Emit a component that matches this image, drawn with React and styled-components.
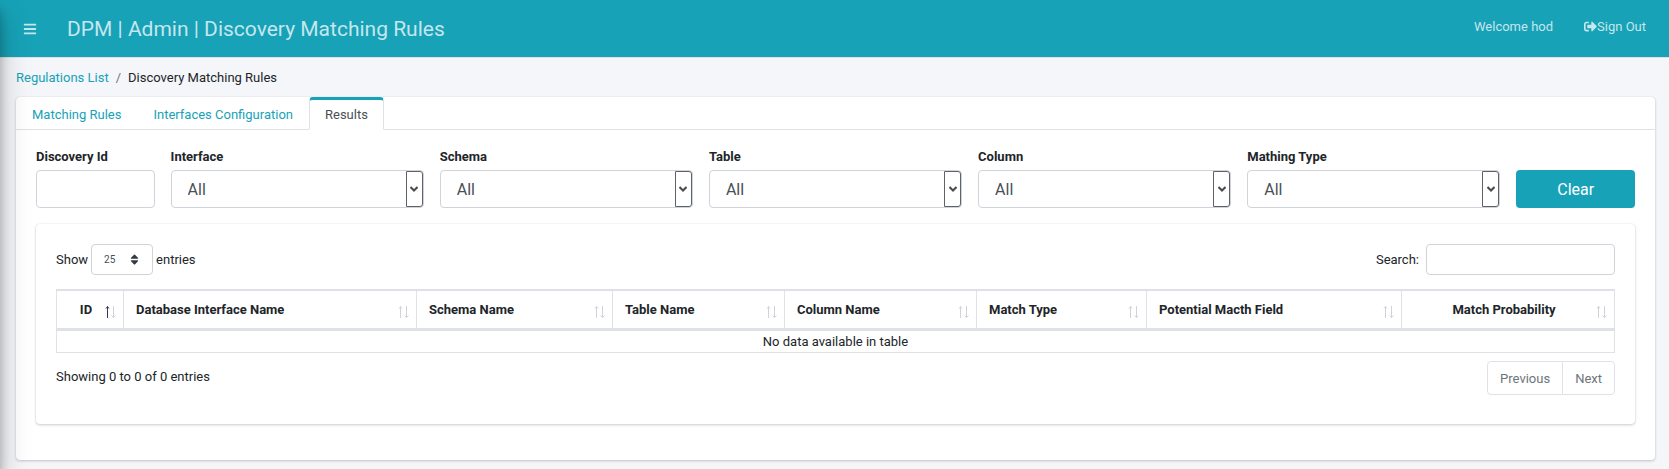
import React from "react";
import styled, { createGlobalStyle } from "styled-components";
import { FaBars, FaSignOutAlt, FaSort } from "react-icons/fa";

const teal = "#17a2b8";
const line = "#dee2e6";

const GlobalStyle = createGlobalStyle`
  *, *::before, *::after { box-sizing: border-box; }
  body {
    margin: 0;
    background: #f4f6f9;
    color: #212529;
    font: 400 13px/20px Roboto, "Liberation Sans", sans-serif;
  }
  button, input, select { font-family: inherit; margin: 0; }
`;

const Sidebar = styled.aside`
  position: fixed;
  top: 0;
  bottom: 0;
  left: -250px;
  width: 250px;
  box-shadow: 0 14px 28px rgba(0, 0, 0, 0.25), 0 10px 10px rgba(0, 0, 0, 0.22);
`;

const Header = styled.header`
  display: flex;
  align-items: center;
  height: 58px;
  padding: 0 23px;
  background: ${teal};
  border-bottom: 1px solid ${line};
  color: rgba(255, 255, 255, 0.75);
`;

const MenuButton = styled.button`
  display: flex;
  padding: 0;
  border: 0;
  background: none;
  color: inherit;
  font-size: 14px;
`;

const Title = styled.h1`
  flex: 1;
  margin: 0 0 0 30px;
  font-size: 21px;
  font-weight: 400;
  line-height: 30px;
`;

const UserNav = styled.nav`
  display: flex;
  gap: 31px;
  padding-bottom: 4px;
`;

const NavLink = styled.a`
  display: flex;
  align-items: center;
  color: inherit;
  text-decoration: none;
`;

const Main = styled.main`
  padding: 10px 14px 8px 16px;
`;

const Breadcrumb = styled.ol`
  display: flex;
  gap: 7px;
  margin: 0 0 9px;
  padding: 0;
  list-style: none;
`;

const Crumb = styled.li`
  display: flex;
  gap: 7px;
  & + &::before {
    content: "/";
    color: #6c757d;
  }
`;

const TextLink = styled.a`
  color: ${teal};
  text-decoration: none;
`;

const Card = styled.section`
  background: #fff;
  border-radius: 4px;
  box-shadow: 0 0 1px rgba(0, 0, 0, 0.13), 0 1px 3px rgba(0, 0, 0, 0.2);
`;

const Tabs = styled.nav`
  display: flex;
  height: 33px;
  border-bottom: 1px solid ${line};
`;

const Tab = styled.a`
  height: 33px;
  padding: 5px 15px 4px;
  border: 1px solid transparent;
  border-top: 3px solid ${(p) => (p.$active ? teal : "transparent")};
  border-radius: 4px 4px 0 0;
  color: ${(p) => (p.$active ? "#495057" : teal)};
  text-decoration: none;
  ${(p) =>
    p.$active &&
    `background: #fff;
     border-right-color: ${line};
     border-left-color: ${line};`}
`;

const Panel = styled.div`
  padding: 17px 20px 36px;
`;

const Filters = styled.form`
  display: grid;
  grid-template-columns: repeat(12, 1fr);
  gap: 16px;
  align-items: end;
  margin-bottom: 16px;
`;

const Field = styled.div`
  grid-column: span ${(p) => p.$span};
`;

const FieldLabel = styled.label`
  display: block;
  margin-bottom: 3px;
  font-weight: 700;
`;

const TextInput = styled.input`
  display: block;
  width: 100%;
  height: 38px;
  padding: 6px 12px;
  border: 1px solid #ced4da;
  border-radius: 4px;
  background: #fff;
  color: #495057;
  font-size: 16px;
`;

const SearchInput = styled(TextInput)`
  width: 189px;
  height: 31px;
  padding: 4px 8px;
  font-size: 13px;
`;

const SelectBox = styled.div`
  position: relative;
`;

const Select = styled.select`
  display: block;
  appearance: none;
  width: 100%;
  height: 38px;
  padding: 0 32px 0 16px;
  border: 1px solid #ced4da;
  border-radius: 4px;
  background: #fff;
  color: #495057;
  font-size: 16px;
`;

const LengthSelect = styled(Select)`
  width: 62px;
  height: 31px;
  padding: 0 24px 0 12px;
  font-size: 10px;
`;

const Opener = styled.span`
  position: absolute;
  top: 1px;
  right: 1px;
  bottom: 1px;
  display: flex;
  align-items: center;
  justify-content: center;
  width: 17px;
  border: 1px solid #5f6368;
  border-radius: 0 3px 3px 0;
  color: #4a4a4a;
  pointer-events: none;
`;

const SortGlyph = styled.span`
  position: absolute;
  top: 0;
  right: 12px;
  bottom: 0;
  display: flex;
  align-items: center;
  color: #343a40;
  font-size: 13px;
  pointer-events: none;
`;

const ClearButton = styled.button`
  grid-column: span 1;
  height: 38px;
  border: 0;
  border-radius: 4px;
  background: ${teal};
  color: #fff;
  font-size: 16px;
`;

const Results = styled(Card)`
  padding: 20px 20px 29px;
`;

const Toolbar = styled.div`
  display: flex;
  align-items: center;
  justify-content: space-between;
  margin-bottom: 14px;
`;

const ToolLabel = styled.label`
  display: flex;
  align-items: center;
  gap: ${(p) => p.$gap};
`;

const Table = styled.table`
  width: 100%;
  table-layout: fixed;
  border-collapse: separate;
  border-spacing: 0;
  border: solid ${line};
  border-width: 1px 0 0 1px;
`;

const HeadCell = styled.th`
  padding: 0;
  border: solid ${line};
  border-width: 1px 1px 3px 0;
`;

const SortButton = styled.button`
  display: flex;
  align-items: center;
  justify-content: space-between;
  width: 100%;
  height: 37px;
  padding: 0 7px 0 ${(p) => (p.$centered ? 21 : 12)}px;
  border: 0;
  background: none;
  color: inherit;
  font-size: 13px;
  font-weight: 700;
  white-space: nowrap;
`;

const HeadText = styled.span`
  flex: 1;
  text-align: ${(p) => (p.$centered ? "center" : "left")};
`;

const Arrows = styled.svg`
  flex: none;
  margin-top: 4px;
  margin-left: 10px;
`;

const EmptyCell = styled.td`
  height: 22px;
  padding: 0;
  border: solid ${line};
  border-width: 0 1px 1px 0;
  text-align: center;
`;

const Footer = styled.div`
  display: flex;
  align-items: flex-start;
  justify-content: space-between;
  padding-top: 8px;
`;

const Info = styled.p`
  margin: 6px 0 0;
`;

const Pager = styled.div`
  display: flex;
`;

const PageButton = styled.button`
  height: 34px;
  padding: 0 12px;
  border: 1px solid ${line};
  background: #fff;
  color: #6c757d;
  font-size: 13px;
  &:first-child { border-radius: 4px 0 0 4px; }
  &:last-child { border-radius: 0 4px 4px 0; }
  & + & { margin-left: -1px; }
`;

const selects = ["Interface", "Schema", "Table", "Column", "Mathing Type"];

const columns = [
  { name: "ID", width: 67, centered: true, sorted: true },
  { name: "Database Interface Name", width: 293 },
  { name: "Schema Name", width: 196 },
  { name: "Table Name", width: 172 },
  { name: "Column Name", width: 192 },
  { name: "Match Type", width: 170 },
  { name: "Potential Macth Field", width: 255 },
  { name: "Match Probability", width: 213, centered: true },
];

function SortArrows({ sorted }) {
  return (
    <Arrows width="12" height="14" viewBox="0 0 12 14" fill="none" aria-hidden="true">
      <g stroke={sorted ? "#34385c" : "#d3d1da"}>
        <path d="M3.5 1.5V13" />
        <path d="M2 3.5L3.5 1.5L5 3.5" />
      </g>
      <g stroke="#d3d1da">
        <path d="M9.5 1V12.5" />
        <path d="M7.5 10.5L9.5 12.5L11.5 10.5" />
      </g>
    </Arrows>
  );
}

function FilterSelect({ label }) {
  const id = label.toLowerCase().replace(" ", "-");
  return (
    <Field $span={2}>
      <FieldLabel htmlFor={id}>{label}</FieldLabel>
      <SelectBox>
        <Select id={id}>
          <option>All</option>
        </Select>
        <Opener>
          <svg width="8" height="7" viewBox="0 0 8 7" fill="none" aria-hidden="true">
            <path d="M0.5 1L4 4.5L7.5 1" stroke="currentColor" strokeWidth="2" />
          </svg>
        </Opener>
      </SelectBox>
    </Field>
  );
}

export default function App() {
  return (
    <>
      <GlobalStyle />
      <Header>
        <MenuButton type="button" aria-label="Toggle menu">
          <FaBars />
        </MenuButton>
        <Title>DPM | Admin | Discovery Matching Rules</Title>
        <UserNav>
          <NavLink href="#profile">Welcome hod</NavLink>
          <NavLink href="#signout">
            <FaSignOutAlt />
            Sign Out
          </NavLink>
        </UserNav>
      </Header>
      <Main>
        <Breadcrumb>
          <Crumb>
            <TextLink href="#regulations">Regulations List</TextLink>
          </Crumb>
          <Crumb>Discovery Matching Rules</Crumb>
        </Breadcrumb>
        <Card>
          <Tabs>
            <Tab href="#rules">Matching Rules</Tab>
            <Tab href="#interfaces">Interfaces Configuration</Tab>
            <Tab href="#results" $active aria-current="page">
              Results
            </Tab>
          </Tabs>
          <Panel>
            <Filters>
              <Field $span={1}>
                <FieldLabel htmlFor="discovery-id">Discovery Id</FieldLabel>
                <TextInput id="discovery-id" type="text" />
              </Field>
              {selects.map((label) => (
                <FilterSelect key={label} label={label} />
              ))}
              <ClearButton type="reset">Clear</ClearButton>
            </Filters>
            <Results>
              <Toolbar>
                <ToolLabel $gap="3px">
                  Show
                  <SelectBox>
                    <LengthSelect defaultValue="25">
                      <option>25</option>
                      <option>50</option>
                      <option>100</option>
                    </LengthSelect>
                    <SortGlyph>
                      <FaSort />
                    </SortGlyph>
                  </SelectBox>
                  entries
                </ToolLabel>
                <ToolLabel $gap="7px">
                  Search:
                  <SearchInput type="search" />
                </ToolLabel>
              </Toolbar>
              <Table>
                <colgroup>
                  {columns.map((c) => (
                    <col key={c.name} width={c.width} />
                  ))}
                </colgroup>
                <thead>
                  <tr>
                    {columns.map((c) => (
                      <HeadCell key={c.name} scope="col">
                        <SortButton type="button" $centered={c.centered}>
                          <HeadText $centered={c.centered}>{c.name}</HeadText>
                          <SortArrows sorted={c.sorted} />
                        </SortButton>
                      </HeadCell>
                    ))}
                  </tr>
                </thead>
                <tbody>
                  <tr>
                    <EmptyCell colSpan={columns.length}>No data available in table</EmptyCell>
                  </tr>
                </tbody>
              </Table>
              <Footer>
                <Info>Showing 0 to 0 of 0 entries</Info>
                <Pager>
                  <PageButton type="button">Previous</PageButton>
                  <PageButton type="button">Next</PageButton>
                </Pager>
              </Footer>
            </Results>
          </Panel>
        </Card>
      </Main>
      <Sidebar />
    </>
  );
}
